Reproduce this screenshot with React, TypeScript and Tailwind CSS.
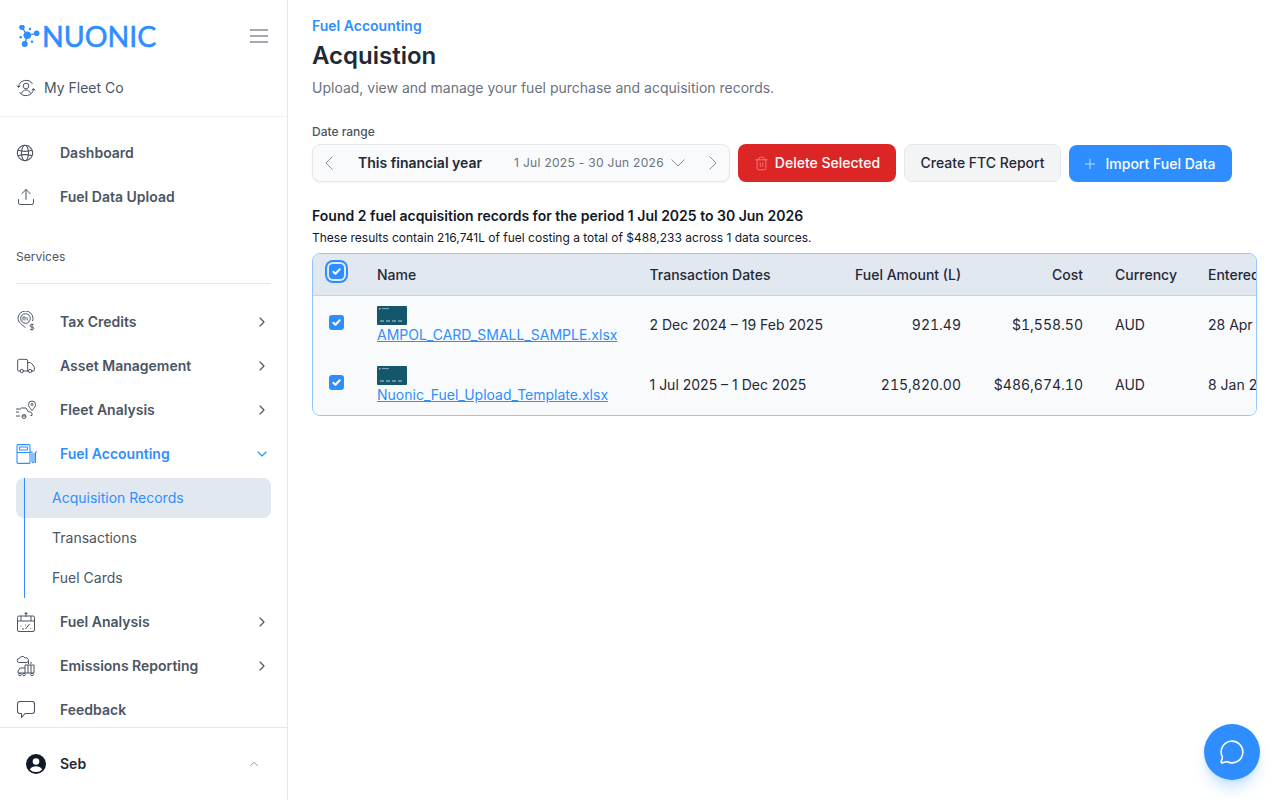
import { ChevronDown, ChevronRight, ChevronUp, MessageCircle, Plus, Trash2, Truck, Upload } from "lucide-react";
import type { ReactNode } from "react";

const Logo = () => (
  <svg width="22" height="22" viewBox="0 0 22 22" className="text-[#2f8eff]" fill="currentColor">
    <path d="M3 2.300 8.300 10.300 17.700 8.300M8.300 10.300 5.700 19" stroke="currentColor" strokeWidth="1.300" fill="none" />
    <circle cx="3" cy="2.300" r="2.700" />
    <circle cx="8.300" cy="10.300" r="3.800" />
    <circle cx="17.700" cy="8.300" r="2.800" />
    <circle cx="5.700" cy="19" r="3" />
    <circle cx="1.700" cy="12.300" r="1.300" />
    <circle cx="11" cy="4" r="1.200" />
    <circle cx="13" cy="16.700" r="1.200" />
  </svg>
);

const FleetSwitch = () => (
  <svg width="20" height="20" viewBox="0 0 20 20" fill="none" stroke="currentColor" strokeWidth="1" className="text-gray-600">
    <path d="M2.500 9a7.600 7.600 0 0 1 14-3M17.500 11a7.600 7.600 0 0 1-14 3" />
    <path d="M.8 7.500 2.500 9.500 4.300 7.800M19.200 12.500 17.500 10.500 15.700 12.200" />
    <circle cx="10" cy="8" r="2.800" />
    <path d="M5.500 15.500c.8-2.500 2.500-3.500 4.500-3.500s3.700 1 4.500 3.500" />
  </svg>
);

const GlobeIcon = () => (
  <svg width="18" height="18" viewBox="0 0 18 18" fill="none" stroke="currentColor" strokeWidth="1.100">
    <circle cx="9" cy="9" r="7.700" />
    <ellipse cx="9" cy="9" rx="3.500" ry="7.700" />
    <path d="M2 6.200c4 1.300 10 1.300 14 0M2 11.800c4-1.300 10-1.300 14 0" />
  </svg>
);

const TaxIcon = () => (
  <svg width="20" height="22" viewBox="0 0 20 22" fill="none" stroke="currentColor" strokeWidth="1">
    <path d="M9.500 16.500C6 14 2 11 2 7.500a7.500 7.500 0 0 1 15 0c0 1-.2 1.800-.6 2.600" />
    <circle cx="9.500" cy="7.500" r="4.800" />
    <path d="M7 9.500V6h2v3.500M11 6v2l1 1.500" strokeWidth=".9" />
    <path d="M17.500 13.500h-2.200a1 1 0 0 0 0 2.500h1.200a1 1 0 0 1 0 2.500H14M16 12.500v7" strokeWidth=".9" />
  </svg>
);

const FleetIcon = () => (
  <svg width="22" height="20" viewBox="0 0 22 20" fill="none" stroke="currentColor" strokeWidth="1">
    <path d="M0 9h5M0 12h3M0 16h4M5 8h5l2.500 4h2c1 0 1.500.8 1.500 2v1.500h-1.500M10 16h-4" />
    <circle cx="8" cy="16.500" r="2" />
    <path d="M16 10.500c-2-2.500-3.500-4-3.500-6a3.500 3.500 0 0 1 7 0c0 2-1.500 3.500-3.500 6z" />
    <circle cx="16" cy="4.500" r="1" />
  </svg>
);

const PumpIcon = () => (
  <svg width="22" height="20" viewBox="0 0 22 20" fill="none" stroke="currentColor" strokeWidth="1.100">
    <rect x="1" y=".6" width="13" height="18.800" rx="1" />
    <rect x="3.500" y="3" width="8" height="3" rx=".6" />
    <path d="M1 8.500h13M14 8h2v9.500c0 1.500 2 1.500 2 0V9M21 8c-1-.3-1.500.2-1.500 1v10" />
  </svg>
);

const AnalysisIcon = () => (
  <svg width="20" height="22" viewBox="0 0 20 22" fill="none" stroke="currentColor" strokeWidth="1">
    <rect x="1.500" y="5" width="17" height="15.500" rx="1.500" />
    <path d="M1.500 10h17M5 5v5M15 5v5M10 1v5M8.500 2.500h3M4.500 15h.8M6 18h2M13.500 13l-4 5M14.500 17.500h.8M9 14h.8" />
  </svg>
);

const EmissionIcon = () => (
  <svg width="20" height="22" viewBox="0 0 20 22" fill="none" stroke="currentColor" strokeWidth="1">
    <path d="M3 7.500a2 2 0 0 1 .5-4 3 3 0 0 1 5.500-.5 2.300 2.300 0 0 1 2 4.500z" />
    <path d="M12.500 6v3M15 7v2M9 10h9v8H9zM9 13H4l-2 3v2h7M12 10v8M15 10v8" />
    <circle cx="4" cy="19.500" r="1.300" />
    <circle cx="8" cy="19.500" r="1.300" />
    <circle cx="16" cy="19.500" r="1.300" />
  </svg>
);

const FeedbackIcon = () => (
  <svg width="20" height="20" viewBox="0 0 20 20" fill="none" stroke="currentColor" strokeWidth="1.100" strokeLinejoin="round">
    <path d="M4 1.500h12a2.500 2.500 0 0 1 2.500 2.500v7a2.500 2.500 0 0 1-2.500 2.500H9L5.500 17.500v-4H4A2.500 2.500 0 0 1 1.500 11V4A2.500 2.500 0 0 1 4 1.500z" />
  </svg>
);

const Avatar = () => (
  <svg width="20" height="20" viewBox="0 0 20 20" className="text-[#111827]">
    <circle cx="10" cy="10" r="10" fill="currentColor" />
    <circle cx="10" cy="7.500" r="3.300" fill="white" />
    <path d="M3.800 15.500c1.300-2.300 3.600-3.300 6.200-3.300s4.900 1 6.200 3.300A8 8 0 0 1 10 18a8 8 0 0 1-6.200-2.500z" fill="white" />
  </svg>
);

const SideChev = ({ d }: { d: string }) => (
  <svg width="8" height="14" viewBox="0 0 8 14" fill="none" stroke="#8b929e" strokeWidth="1">
    <path d={d} />
  </svg>
);

const navTop = [
  { label: "Dashboard", icon: <GlobeIcon /> },
  { label: "Fuel Data Upload", icon: <Upload size={20} strokeWidth={1.2} /> },
];

const NavRow = ({
  icon,
  label,
  chevron,
  active,
}: {
  icon: ReactNode;
  label: string;
  chevron?: boolean;
  active?: boolean;
}) => (
  <div className={`flex h-11 items-center pl-4 pr-[17px] text-sm font-semibold ${active ? "text-[#2f8eff]" : "text-[#4b5563]"}`}>
    <div className="flex w-11 shrink-0 items-center">{icon}</div>
    <span className="flex-1">{label}</span>
    {chevron && !active && <ChevronRight size={16} strokeWidth={1.75} />}
    {active && <ChevronDown size={16} strokeWidth={1.75} />}
  </div>
);

const Sidebar = () => (
  <aside className="flex h-[800px] w-[288px] shrink-0 flex-col border-r border-[#e5e7eb]">
    <div className="flex h-[72px] items-center justify-between pl-[19px] pr-[19px]">
      <div className="flex items-center">
        <Logo />
        <span className="ml-[1px] text-[28.5px] leading-none text-[#2f8eff] font-['Lato',sans-serif] [-webkit-text-stroke:0.6px_#2f8eff]">NUONIC</span>
      </div>
      <svg width="18" height="14" viewBox="0 0 18 14" stroke="#4b5563" strokeWidth="1.200">
        <path d="M0 1h18M0 7h18M0 13h18" />
      </svg>
    </div>
    <div className="flex h-[45px] items-start gap-2 border-b border-[#f0f1f3] pl-4 pt-[6px] text-sm text-[#4b5563]">
      <FleetSwitch />
      <span>My Fleet Co</span>
    </div>
    <div className="flex flex-col pt-[14px]">
      {navTop.map((item) => (
        <NavRow key={item.label} icon={item.icon} label={item.label} />
      ))}
    </div>
    <div className="mx-4 mt-[28px] h-[37px] border-b border-[#e5e7eb] pt-[2px] text-xs text-[#4b5563]">Services</div>
    <div className="flex flex-col pt-4">
      <NavRow icon={<TaxIcon />} label="Tax Credits" chevron />
      <NavRow icon={<Truck size={20} strokeWidth={1.2} />} label="Asset Management" chevron />
      <NavRow icon={<FleetIcon />} label="Fleet Analysis" chevron />
      <NavRow icon={<PumpIcon />} label="Fuel Accounting" active />
      <div className="relative my-[2px] ml-4 flex w-[255px] flex-col text-sm text-[#4b5563]">
        <div className="absolute bottom-0 left-2 top-0 w-px bg-[#2f8eff]" />
        <div className="flex h-10 items-center rounded-lg bg-[#e2e8f0] pl-9 text-[#2f8eff]">Acquisition Records</div>
        <div className="flex h-10 items-center pl-9">Transactions</div>
        <div className="flex h-10 items-center pl-9">Fuel Cards</div>
      </div>
      <NavRow icon={<AnalysisIcon />} label="Fuel Analysis" chevron />
      <NavRow icon={<EmissionIcon />} label="Emissions Reporting" chevron />
      <NavRow icon={<FeedbackIcon />} label="Feedback" />
    </div>
    <div className="mt-[-5px] flex h-[73px] items-center border-t border-[#e5e7eb] pl-[26px] pr-[26px] text-sm font-semibold text-[#1f2937]">
      <Avatar />
      <span className="ml-[14px] flex-1">Seb</span>
      <ChevronUp size={14} strokeWidth={1.25} className="text-[#6b7280]" />
    </div>
  </aside>
);

const Check = ({ ring }: { ring?: boolean }) => (
  <div className={`flex h-[15px] w-[15px] items-center justify-center bg-[#2f8eff] ${ring ? "-mt-[5px] rounded-[4px] shadow-[0_0_0_2px_#e2e8f0,0_0_0_4px_#2f8eff]" : "-mt-[6px] rounded-[3px]"}`}>
    <svg width="11" height="11" viewBox="0 0 11 11" fill="none" stroke="white" strokeWidth="2" strokeLinecap="round" strokeLinejoin="round">
      <path d="M2.300 5.700 4.500 7.800 8.700 3.300" />
    </svg>
  </div>
);

const Thumb = () => (
  <svg width="30" height="19" viewBox="0 0 30 19" className="block">
    <rect width="30" height="19" rx="1" fill="#14566b" />
    <rect x="2" y="2" width="1.500" height="1.500" fill="#e2a0a0" />
    <rect x="5" y="2.300" width="7" height=".8" fill="#9fc3cc" />
    <path d="M3 15h4M9 15h4M15 15h4M21 15h4" stroke="#b9d3d9" strokeWidth="1" />
  </svg>
);

const records = [
  {
    file: "AMPOL_CARD_SMALL_SAMPLE.xlsx",
    dates: "2 Dec 2024 – 19 Feb 2025",
    amount: "921.49",
    cost: "$1,558.50",
    entered: "28 Apr 2025",
  },
  {
    file: "Nuonic_Fuel_Upload_Template.xlsx",
    dates: "1 Jul 2025 – 1 Dec 2025",
    amount: "215,820.00",
    cost: "$486,674.10",
    entered: "8 Jan 2026",
  },
];

const Toolbar = () => (
  <div className="mt-[4px] flex items-start gap-2">
    <div className="flex h-[38px] w-[418px] items-center rounded-lg border border-[#e5e7eb] bg-[#f9fafb] pl-[12px] pr-[12px] shadow-xs">
      <SideChev d="M7.500 .5 1 7l6.500 6.500" />
      <span className="ml-[25px] text-sm font-semibold text-[#1f2937]">This financial year</span>
      <span className="ml-8 text-xs tracking-[0.3px] text-[#6b7280]">1 Jul 2025 - 30 Jun 2026</span>
      <svg width="14" height="8" viewBox="0 0 14 8" fill="none" stroke="#8b929e" strokeWidth="1" className="ml-[7px]">
        <path d="M.5.500 7 7l6.500-6.500" />
      </svg>
      <span className="ml-auto">
        <SideChev d="M.5 .5 7 7 .5 13.500" />
      </span>
    </div>
    <button className="flex h-[38px] w-[158px] items-center justify-center gap-[6px] rounded-lg bg-[#dc2626] text-sm font-medium text-white">
      <Trash2 size={15} strokeWidth={1} className="text-[#fca5a5]" />
      Delete Selected
    </button>
    <button className="h-[38px] w-[157px] rounded-lg border border-[#e5e7eb] bg-[#f3f4f6] text-sm font-medium text-[#1f2937]">
      Create FTC Report
    </button>
    <button className="mt-px flex h-[37px] w-[163px] items-center justify-center gap-[7px] rounded-lg bg-[#2f8eff] pr-[3px] text-sm font-medium text-white">
      <Plus size={16} strokeWidth={1} />
      Import Fuel Data
    </button>
  </div>
);

const RecordsTable = () => (
  <div className="mt-[7px] w-[945px] overflow-hidden rounded-lg border border-[#93c5fd]">
    <table className="w-[1000px] table-fixed text-sm text-[#1f2937]">
      <colgroup>
        <col className="w-[48px]" />
        <col className="w-[272.5px]" />
        <col className="w-[205.5px]" />
        <col className="w-[138px]" />
        <col className="w-[122px]" />
        <col className="w-[93px]" />
        <col className="w-[121px]" />
      </colgroup>
      <thead>
        <tr className="h-[41px] border-b border-[#cbd5e1] bg-[#e2e8f0] text-[#1f2937]">
          <th className="pl-4">
            <Check ring />
          </th>
          <th className="px-4 pt-[2px] text-left font-medium">Name</th>
          <th className="px-4 pt-[2px] text-left font-medium">Transaction Dates</th>
          <th className="px-4 pt-[2px] text-right font-medium whitespace-nowrap">Fuel Amount (L)</th>
          <th className="px-4 pt-[2px] text-right font-medium">Cost</th>
          <th className="px-4 pt-[2px] text-left font-medium">Currency</th>
          <th className="px-4 pt-[2px] text-left font-medium whitespace-nowrap">Entered</th>
        </tr>
      </thead>
      <tbody className="bg-[#f9fafb]">
        {records.map((record) => (
          <tr key={record.file} className="h-[60px]">
            <td className="pl-4">
              <Check />
            </td>
            <td className="px-4">
              <Thumb />
              <a className="block text-[#2f8eff] underline">{record.file}</a>
            </td>
            <td className="px-4 whitespace-nowrap">{record.dates}</td>
            <td className="px-4 text-right tabular-nums">{record.amount}</td>
            <td className="px-4 text-right tabular-nums">{record.cost}</td>
            <td className="px-4">AUD</td>
            <td className="px-4 whitespace-nowrap">{record.entered}</td>
          </tr>
        ))}
      </tbody>
    </table>
  </div>
);

const App = () => {
  return (
    <div className="relative flex h-[800px] w-[1280px] overflow-hidden bg-white font-['Inter',sans-serif]">
      <Sidebar />
      <main className="flex-1 pl-6 pt-4">
        <p className="text-sm leading-5 font-semibold text-[#2f8eff]">Fuel Accounting</p>
        <h1 className="mt-[4px] text-2xl leading-8 font-semibold text-[#1f2937]">Acquistion</h1>
        <p className="mt-[6px] text-sm leading-5 text-[#6b7280]">Upload, view and manage your fuel purchase and acquisition records.</p>
        <p className="mt-[26px] text-xs leading-4 font-medium text-[#4b5563]">Date range</p>
        <Toolbar />
        <p className="mt-[24px] text-sm leading-5 font-semibold text-[#111827]">
          Found 2 fuel acquisition records for the period 1 Jul 2025 to 30 Jun 2026
        </p>
        <p className="mt-[4px] text-xs leading-4 text-[#111827]">
          These results contain 216,741L of fuel costing a total of $488,233 across 1 data sources.
        </p>
        <RecordsTable />
      </main>
      <button className="absolute bottom-5 right-5 flex h-14 w-14 items-center justify-center rounded-full bg-[#2f8eff] text-white shadow-lg shadow-blue-300/50">
        <MessageCircle size={26} strokeWidth={1.5} />
      </button>
    </div>
  );
};

export default App;
